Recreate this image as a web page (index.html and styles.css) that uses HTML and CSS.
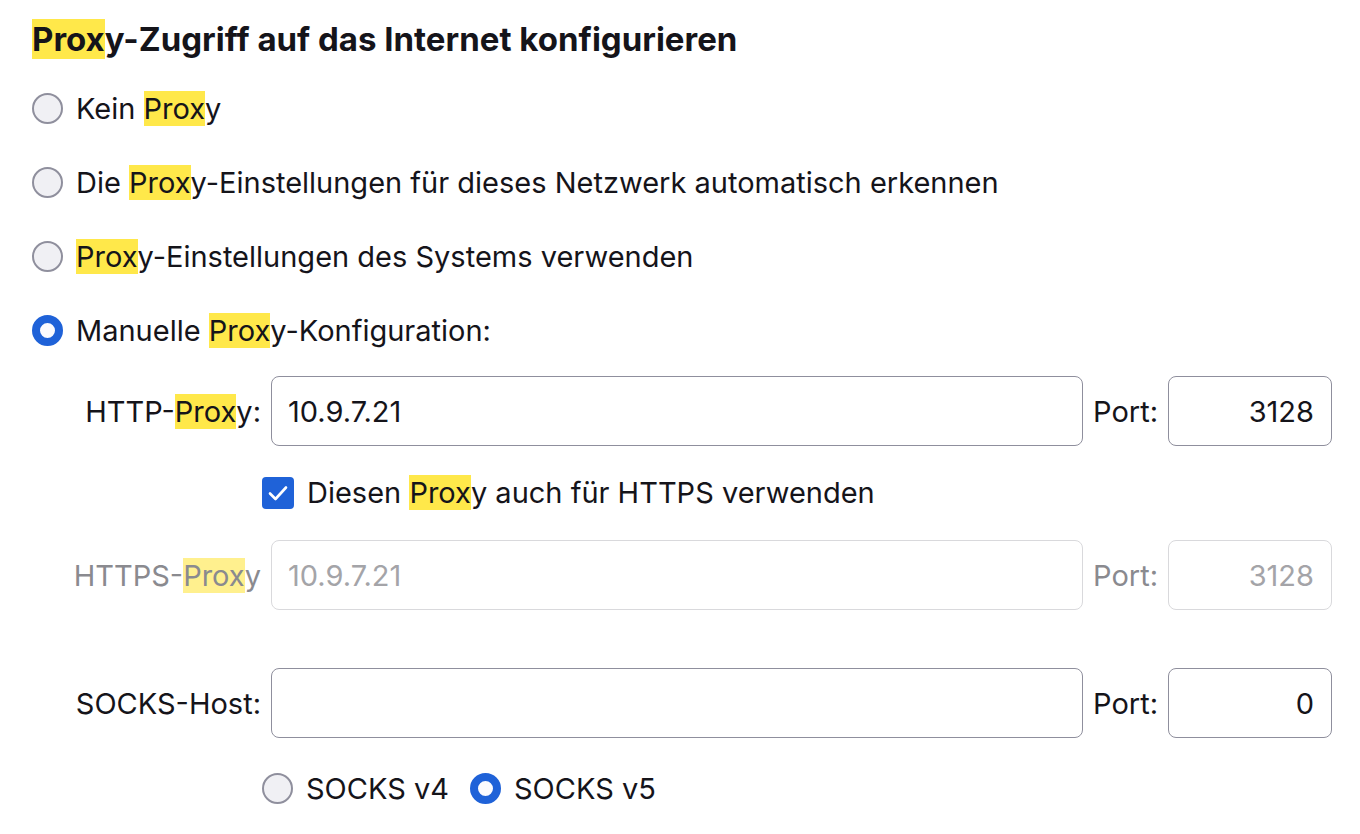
FILE: index.html
```html
<!DOCTYPE html>
<html lang="de">
<head>
<meta charset="utf-8">
<title>Verbindungseinstellungen</title>
<link rel="stylesheet" href="styles.css">
</head>
<body>
<main class="page">
  <h1 class="title"><mark class="hl">Prox</mark>y-Zugriff auf das Internet konfigurieren</h1>

  <div class="options">
    <label class="radio-row"><span class="radio"></span><span><span>Kein </span><mark class="hl">Prox</mark>y</span></label>
    <label class="radio-row"><span class="radio"></span><span>Die <mark class="hl">Prox</mark>y-Einstellungen für dieses Netzwerk automatisch erkennen</span></label>
    <label class="radio-row"><span class="radio"></span><span><mark class="hl">Prox</mark>y-Einstellungen des Systems verwenden</span></label>
    <label class="radio-row"><span class="radio checked"></span><span>Manuelle <mark class="hl">Prox</mark>y-Konfiguration:</span></label>
  </div>

  <div class="manual">
    <span class="lbl">HTTP-<mark class="hl">Prox</mark>y:</span>
    <div class="field">10.9.7.21</div>
    <span class="lbl">Port:</span>
    <div class="field port">3128</div>

    <label class="check-row"><span class="checkbox"><svg viewBox="0 0 32 32" width="32" height="32"><path d="M8 16.5 L13.5 22 L24 10.5" fill="none" stroke="#fff" stroke-width="2.6" stroke-linecap="round" stroke-linejoin="round"/></svg></span><span>Diesen <mark class="hl">Prox</mark>y auch für HTTPS verwenden</span></label>

    <span class="lbl disabled">HTTPS-<mark class="hl dim">Prox</mark>y</span>
    <div class="field disabled">10.9.7.21</div>
    <span class="lbl disabled">Port:</span>
    <div class="field port disabled">3128</div>

    <span class="lbl socks">SOCKS-Host:</span>
    <div class="field socks"></div>
    <span class="lbl socks">Port:</span>
    <div class="field port socks">0</div>

    <div class="socks-versions">
      <label class="radio-row small"><span class="radio"></span><span>SOCKS v4</span></label>
      <label class="radio-row small"><span class="radio checked"></span><span>SOCKS v5</span></label>
    </div>
  </div>
</main>
</body>
</html>
```

FILE: styles.css
```css
html, body {
  margin: 0;
  padding: 0;
  background: #ffffff;
}

body {
  font-family: Inter, "Noto Sans", "Liberation Sans", sans-serif;
  color: #15141a;
  font-size: 29px;
}

.page {
  padding: 13px 28px 0 32px;
}

.title {
  font-size: 33px;
  font-weight: 700;
  margin: 0;
  line-height: 52px;
}

.hl {
  background: #ffe84a;
  color: inherit;
  padding: 0;
}

.hl.dim {
  background: #fff08e;
}

.options {
  display: flex;
  flex-direction: column;
  gap: 43px;
  margin-top: 28px;
}

.radio-row {
  display: flex;
  align-items: center;
  gap: 13px;
  line-height: 31px;
}

.radio {
  box-sizing: border-box;
  width: 31px;
  height: 31px;
  border-radius: 50%;
  border: 2px solid #8f8f9d;
  background: #f0f0f4;
  flex: none;
}

.radio.checked {
  border: 8px solid #1f62d8;
  background: #fbfbfe;
}

.manual {
  display: grid;
  grid-template-columns: 185px 1fr auto 164px;
  column-gap: 10px;
  align-items: center;
  margin: 30px 0 0 44px;
}

.lbl {
  justify-self: end;
  white-space: nowrap;
}

.lbl.disabled {
  color: #8a8a8f;
}

.field {
  box-sizing: border-box;
  height: 70px;
  border: 1.5px solid #8f8f9d;
  border-radius: 8px;
  padding: 0 16px;
  display: flex;
  align-items: center;
  background: #fff;
}

.field.port {
  justify-content: flex-end;
  padding-right: 17px;
}

.field.disabled {
  border-color: #d9d9dc;
  color: #a4a4a8;
}

.field.socks {
  margin-top: 58px;
}

.lbl.socks {
  margin-top: 58px;
}

.check-row {
  grid-column: 2 / 5;
  display: flex;
  align-items: center;
  gap: 13px;
  margin: 31px 0 31px -9px;
  line-height: 32px;
}

.checkbox {
  width: 32px;
  height: 32px;
  border-radius: 4px;
  background: #1f62d8;
  flex: none;
  display: block;
}

.checkbox svg {
  display: block;
}

.socks-versions {
  grid-column: 2 / 5;
  display: flex;
  gap: 21px;
  margin: 35px 0 0 -9px;
}
```
